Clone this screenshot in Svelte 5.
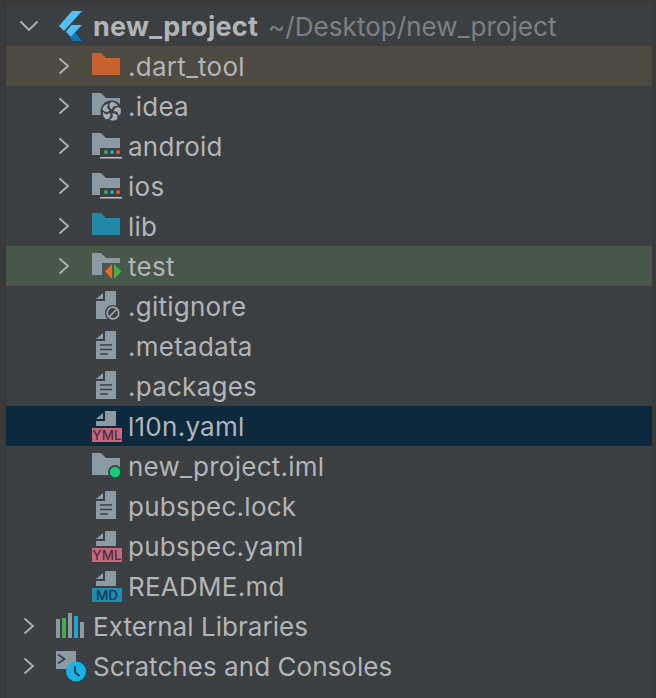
<script>
  const rows = [
    { name: '.dart_tool', icon: 'dart', arrow: true, tone: 'excluded' },
    { name: '.idea', icon: 'idea', arrow: true },
    { name: 'android', icon: 'module', arrow: true },
    { name: 'ios', icon: 'module', arrow: true },
    { name: 'lib', icon: 'lib', arrow: true },
    { name: 'test', icon: 'test', arrow: true, tone: 'testrow' },
    { name: '.gitignore', icon: 'ignore' },
    { name: '.metadata', icon: 'text' },
    { name: '.packages', icon: 'text' },
    { name: 'l10n.yaml', icon: 'yml', tone: 'selected' },
    { name: 'new_project.iml', icon: 'iml' },
    { name: 'pubspec.lock', icon: 'text' },
    { name: 'pubspec.yaml', icon: 'yml' },
    { name: 'README.md', icon: 'md' }
  ];
  const blades = [0, 72, 144, 216, 288];
</script>

{#snippet chevron(open)}
  {#if open}
    <svg class="chev" width="20" height="12" viewBox="0 0 20 12">
      <path d="M1.5 1.5L10 10L18.5 1.5" />
    </svg>
  {:else}
    <svg class="chev" width="14" height="18" viewBox="0 0 14 18">
      <path d="M2.5 1.5L11 9L2.5 16.5" />
    </svg>
  {/if}
{/snippet}

{#snippet icon(kind)}
  <svg class="ico" width="32" height="32" viewBox="0 0 32 32">
    {#if kind === 'dart'}
      <path d="M0 3H9L14 8H28V25H0Z" fill="#c7622f" />
    {:else if kind === 'lib'}
      <path d="M0 3H9L14 8H28V25H0Z" fill="#2288a8" />
    {:else if kind === 'idea'}
      <path d="M0 3H9L14 8H28V25H0Z" fill="#8b9aa3" />
      <circle cx="19.5" cy="21.5" r="11" fill="#3c3f41" />
      {#each blades as a}
        <path d="M0.5 -2C-3 -4 -3 -8 0 -9.5C3 -9.5 6 -7.5 6.5 -5C4 -6.5 1.5 -5.5 0.5 -2Z" fill="#a3aeb6" transform="translate(19.5 21.5) rotate({a})" />
      {/each}
    {:else if kind === 'module'}
      <path d="M0 3H9L14 8H28V25H0Z" fill="#8b9aa3" />
      <rect x="8" y="18" width="24" height="11" fill="#3c3f41" />
      <circle cx="14" cy="22" r="2" fill="#3fae4b" />
      <circle cx="20" cy="22" r="2" fill="#1ea3d8" />
      <circle cx="26" cy="22" r="2" fill="#d8632c" />
      <rect x="8" y="27" width="22" height="1.5" fill="#b9c0c4" />
    {:else if kind === 'test'}
      <path d="M0 3H9L14 8H28V25H0Z" fill="#8b9aa3" />
      <path d="M10 13H32V31H10Z" fill="#49574a" />
      <path d="M20 14V29L13 21.5Z" fill="#f26522" />
      <path d="M22 14V29L29.5 21.5Z" fill="#3fae4b" />
    {:else if kind === 'iml'}
      <path d="M0 3H9L14 8H28V25H0Z" fill="#8b9aa3" />
      <circle cx="23" cy="22" r="7" fill="#3c3f41" />
      <circle cx="23" cy="22" r="5.2" fill="#0ed174" />
    {:else if kind === 'ignore'}
      <path d="M13 1H24V29H4V11H13Z" fill="#8b9aa3" />
      <path d="M4 9L11 3V9Z" fill="#8b9aa3" />
      <circle cx="21" cy="23" r="8" fill="#3c3f41" />
      <circle cx="21" cy="23" r="5.8" fill="none" stroke="#9aa7b0" stroke-width="1.7" />
      <path d="M17 27L25 19" stroke="#9aa7b0" stroke-width="1.7" />
    {:else if kind === 'text'}
      <path d="M13 1H24V29H4V11H13Z" fill="#8b9aa3" />
      <path d="M4 9L11 3V9Z" fill="#8b9aa3" />
      <path d="M8 15H20M8 19.5H20M8 24H16" stroke="#3c3f41" stroke-width="1.7" />
    {:else if kind === 'yml' || kind === 'md'}
      <path d="M13 1H24V16H4V11H13Z" fill="#8b9aa3" />
      <path d="M4 9L11 3V9Z" fill="#8b9aa3" />
    {/if}
  </svg>
  {#if kind === 'yml'}<span class="tag yml">YML</span>{/if}
  {#if kind === 'md'}<span class="tag md">MD</span>{/if}
{/snippet}

<div class="frame">
  <div class="panel">
    <div class="row root">
      <span class="gutter">{@render chevron(true)}</span>
      <svg class="logo" width="23" height="32" viewBox="0 0 23 32">
        <path d="M7 22L12 17L23 31H14Z" fill="#0d76b8" />
        <path d="M13 1H23L5 21L0 16Z" fill="#4fc3f7" />
        <path d="M12.5 15H23L12 26.5L7 21.5Z" fill="#4fc3f7" />
      </svg>
      <span class="name bold">new_project</span>
      <span class="name path">~/Desktop/new_project</span>
    </div>
    {#each rows as r}
      <div class="row child {r.tone ?? ''}">
        <span class="gutter">{#if r.arrow}{@render chevron(false)}{/if}</span>
        <span class="slot">{@render icon(r.icon)}</span>
        <span class="name">{r.name}</span>
      </div>
    {/each}
    <div class="row top">
      <span class="gutter">{@render chevron(false)}</span>
      <svg class="lead" width="30" height="26" viewBox="0 0 30 26">
        <rect x="0" y="6" width="4" height="19" fill="#8b9aa3" />
        <rect x="6" y="5" width="4" height="20" fill="#3fae4b" />
        <rect x="12" y="0" width="4" height="25" fill="#8b9aa3" />
        <rect x="18" y="3" width="4" height="22" fill="#1ea3d8" />
        <rect x="24" y="9" width="4" height="16" fill="#8b9aa3" />
      </svg>
      <span class="name">External Libraries</span>
    </div>
    <div class="row top">
      <span class="gutter">{@render chevron(false)}</span>
      <svg class="lead" width="30" height="32" viewBox="0 0 30 32">
        <rect x="0" y="1" width="20" height="18" fill="#8b9aa3" />
        <path d="M2 4.5L8.5 9L2 13.5" fill="none" stroke="#3c3f41" stroke-width="1.7" />
        <circle cx="20" cy="21.5" r="10" fill="#12b5e5" />
        <path d="M19 16V22.5L23.5 26" fill="none" stroke="#1d3a4a" stroke-width="2" />
      </svg>
      <span class="name">Scratches and Consoles</span>
    </div>
  </div>
</div>

<style>
  :global(body) { margin: 0; background: #3a3a3a; }
  .frame {
    width: 656px;
    height: 698px;
    box-sizing: border-box;
    padding: 3px 4px 0 5px;
    background: #3a3a3a;
    overflow: hidden;
  }
  .panel {
    height: 695px;
    padding-top: 3px;
    box-sizing: border-box;
    border-left: 1px solid #333537;
    background: #3c3f41;
    font-family: Inter, "Liberation Sans", sans-serif;
    font-size: 26px;
    letter-spacing: 0.05px;
    color: #b2b5b7;
    overflow: hidden;
  }
  .row {
    display: flex;
    align-items: center;
    height: 40px;
    white-space: nowrap;
  }
  .gutter { width: 65px; display: flex; justify-content: flex-end; flex: none; }
  .chev { flex: none; }
  .chev path { fill: none; stroke: #acb0b3; stroke-width: 1.9; }
  .root .gutter { width: 33px; }
  .top .gutter { width: 30px; }
  .excluded { background: #4d4a42; }
  .testrow { background: #49574a; }
  .selected { background: #0d293e; }
  .slot { position: relative; width: 32px; height: 32px; margin-left: 21px; margin-right: 4px; flex: none; }
  .ico { display: block; }
  .tag {
    position: absolute;
    left: 0;
    top: 18px;
    width: 30px;
    height: 14px;
    font-size: 13.5px;
    line-height: 14px;
    text-align: center;
    font-weight: 500;
    letter-spacing: 0;
  }
  .yml { background: #c7667c; color: #4a323c; }
  .md { background: #1f8cb2; color: #123a4e; }
  .logo { margin-left: 20px; margin-right: 11px; flex: none; }
  .name { padding-top: 1px; }
  .child .name { letter-spacing: 0.25px; }
  .bold { font-weight: 700; font-size: 27px; letter-spacing: 0.25px; }
  .path { color: #7c8083; margin-left: 10px; }
  .lead { margin-left: 20px; margin-right: 7px; flex: none; }
</style>
